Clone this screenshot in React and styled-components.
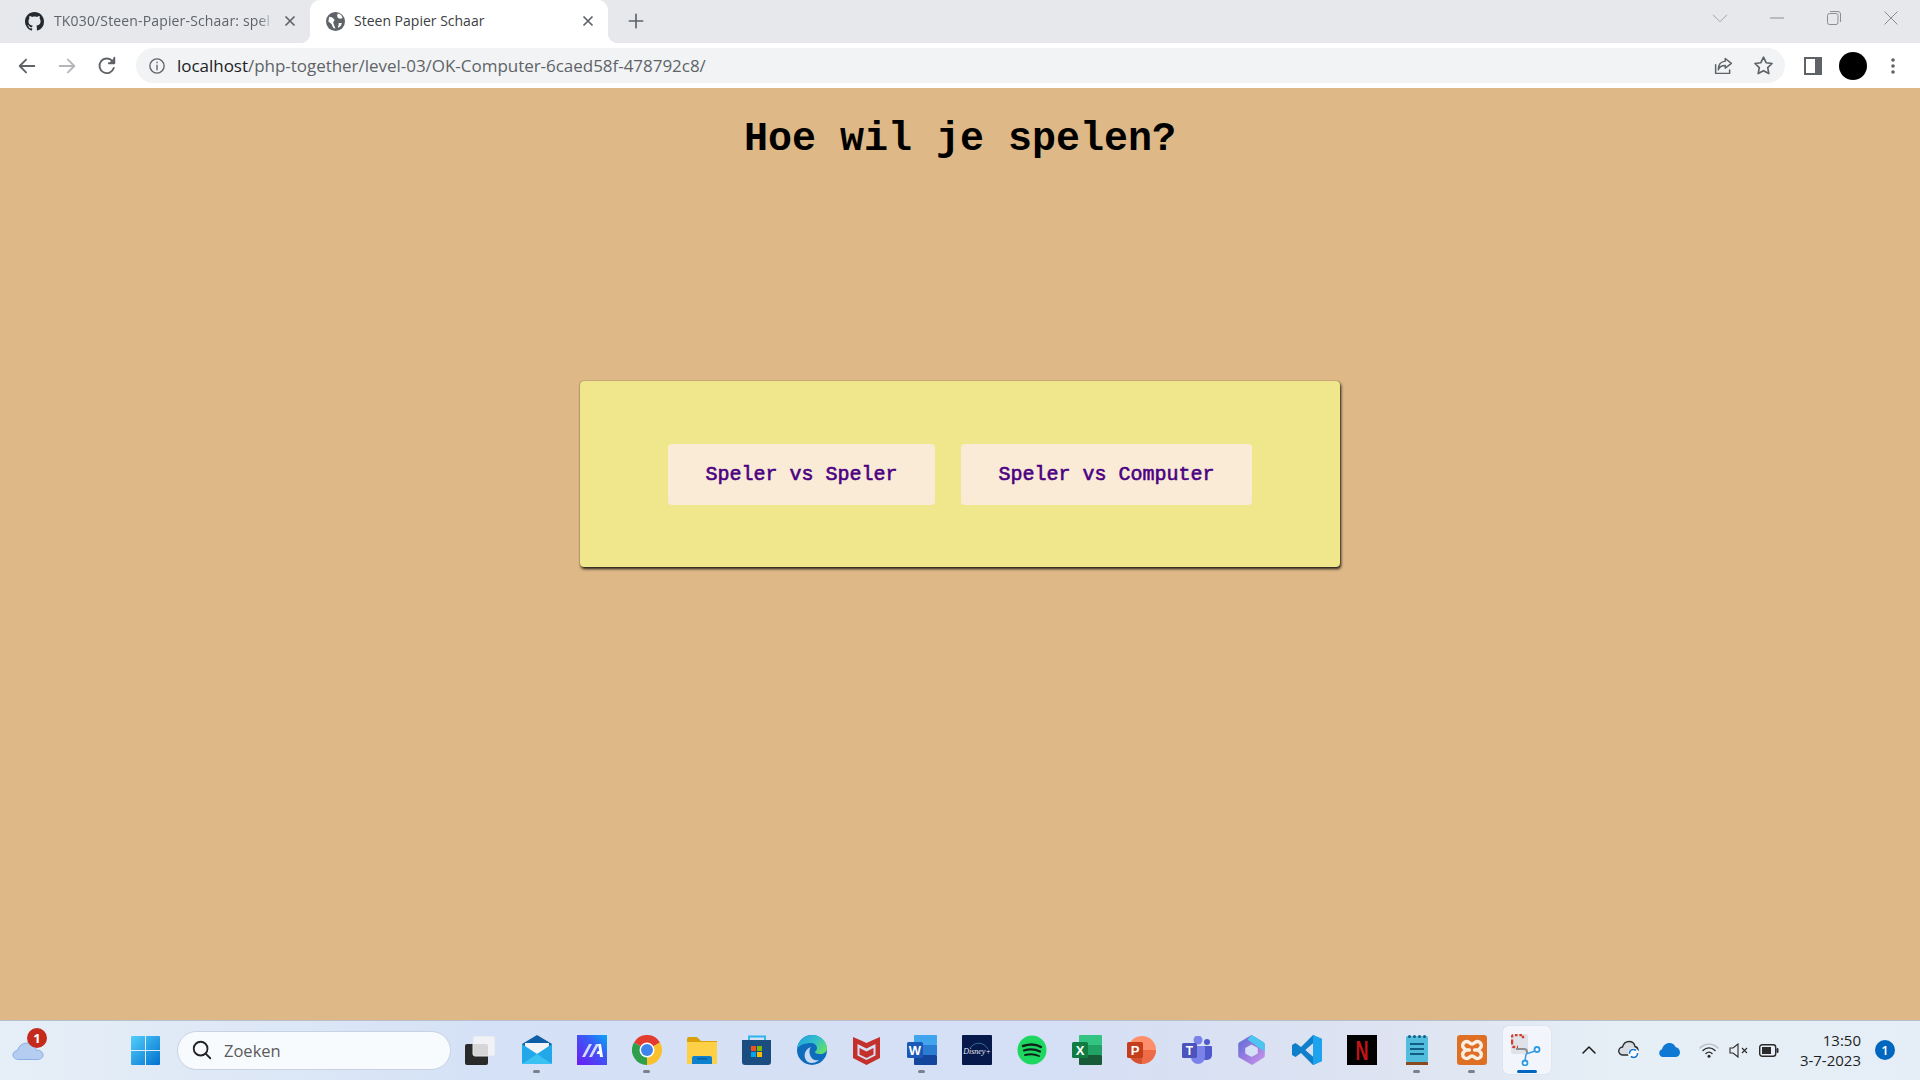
import React from "react";
import styled, { createGlobalStyle } from "styled-components";

const GlobalStyle = createGlobalStyle`
	html, body {
		margin: 0;
		padding: 0;
		height: 100%;
		overflow: hidden;
	}
	* {
		box-sizing: border-box;
	}
	svg {
		display: block;
	}
`;

const uiFont = `"Open Sans", "Noto Sans", sans-serif`;

const Screen = styled.div`
	display: flex;
	flex-direction: column;
	width: 1920px;
	height: 1080px;
	font-family: ${uiFont};
`;

/* browser chrome */
const TabStrip = styled.div`
	display: flex;
	height: 43px;
	flex: none;
	background: #e6e8ec;
`;

const Tab = styled.div`
	position: relative;
	display: flex;
	align-items: center;
	width: ${(props) => props.$width}px;
	height: 43px;
	padding: 0 12px 1px ${(props) => props.$inset}px;
	border-radius: 10px 10px 0 0;
	background: ${(props) => (props.$active ? "#ffffff" : "transparent")};
	${(props) =>
		props.$active &&
		`
		&::before, &::after {
			content: "";
			position: absolute;
			bottom: 0;
			width: 10px;
			height: 10px;
		}
		&::before {
			left: -10px;
			background: radial-gradient(circle at 0 0, transparent 10px, #ffffff 10.5px);
		}
		&::after {
			right: -10px;
			background: radial-gradient(circle at 100% 0, transparent 10px, #ffffff 10.5px);
		}
	`}
`;

const TabTitle = styled.span`
	flex: 1;
	min-width: 0;
	margin: -2px 8px 0 ${(props) => (props.$active ? 9 : 10)}px;
	overflow: hidden;
	white-space: nowrap;
	font-size: 14px;
	color: ${(props) => (props.$active ? "#3c4043" : "#5f6368")};
	${(props) =>
		props.$fade &&
		`
		letter-spacing: 0.15px;
		-webkit-mask-image: linear-gradient(90deg, #000 93%, transparent 100%);
		mask-image: linear-gradient(90deg, #000 93%, transparent 100%);
	`}
`;

const NewTab = styled.div`
	display: flex;
	align-items: center;
	justify-content: center;
	width: 20px;
	height: 42px;
	margin-left: 18px;
`;

const WindowControls = styled.div`
	display: flex;
	margin-left: auto;
`;

const WindowButton = styled.div`
	display: flex;
	align-items: center;
	justify-content: center;
	width: ${(props) => props.$width}px;
	height: 36px;
	margin-right: ${(props) => props.$gap || 0}px;
`;

const Toolbar = styled.div`
	display: flex;
	align-items: center;
	height: 45px;
	flex: none;
	padding: 0 7px 0 7px;
	background: #ffffff;
`;

const ToolButton = styled.div`
	display: flex;
	align-items: center;
	justify-content: center;
	flex: none;
	width: 40px;
	height: 34px;
`;

const Omnibox = styled.div`
	display: flex;
	align-items: center;
	flex: 1;
	height: 35px;
	margin: 0 8px 0 9px;
	padding: 0 2px 0 12px;
	border-radius: 18px;
	background: #f1f3f4;
`;

const Url = styled.div`
	flex: 1;
	margin-left: 11px;
	font-size: 17px;
	letter-spacing: -0.03px;
	white-space: nowrap;
	color: #5f6368;
	span {
		color: #202124;
	}
`;

const Avatar = styled.div`
	width: 28px;
	height: 28px;
	border-radius: 50%;
	background: #000000;
`;

/* page */
const Page = styled.main`
	flex: 1;
	display: flex;
	flex-direction: column;
	align-items: center;
	padding-top: 29px;
	background: #deb887;
`;

const Title = styled.h1`
	margin: 0 0 219px;
	font-family: "Liberation Mono", monospace;
	font-size: 40px;
	font-weight: 700;
	line-height: 45px;
	color: #000000;
`;

const Card = styled.section`
	display: flex;
	justify-content: center;
	gap: 26px;
	width: 760px;
	height: 186px;
	padding-top: 63px;
	border-radius: 4px;
	background: #f0e68c;
	box-shadow: 1px 2px 3px rgba(0, 0, 0, 0.85), 0 0 1px rgba(0, 0, 0, 0.6);
`;

const ModeButton = styled.button`
	height: 61px;
	padding: 0 37.5px;
	border: none;
	border-radius: 4px;
	background: #faebd7;
	font-family: "Liberation Mono", monospace;
	font-size: 20px;
	font-weight: 400;
	-webkit-text-stroke: 0.6px #4b0082;
	color: #4b0082;
`;

/* taskbar */
const Taskbar = styled.footer`
	display: flex;
	align-items: center;
	height: 60px;
	flex: none;
	padding-bottom: 1px;
	border-top: 1px solid #b9bec8;
	background: linear-gradient(90deg, #e6eff7 0%, #d5e1f6 25%, #d5dff5 55%, #dde3f1 72%, #e6eff6 85%, #e5eef6 100%);
`;

const Weather = styled.div`
	position: relative;
	display: flex;
	justify-content: center;
	width: 56px;
	margin-right: 62px;
`;

const WeatherBadge = styled.div`
	position: absolute;
	top: -13px;
	left: 27px;
	width: 20px;
	height: 20px;
	border-radius: 50%;
	background: #c42b1c;
	color: #ffffff;
	font-size: 13px;
	font-weight: 700;
	line-height: 20px;
	text-align: center;
`;

const AppSlot = styled.div`
	position: relative;
	display: flex;
	align-items: center;
	justify-content: center;
	flex: none;
	width: ${(props) => props.$width || 55}px;
	height: 48px;
	${(props) =>
		props.$open &&
		`
		&::after {
			content: "";
			position: absolute;
			left: 50%;
			bottom: 1px;
			width: 7px;
			height: 3px;
			margin-left: -3.5px;
			border-radius: 2px;
			background: #7c808c;
		}
	`}
`;

const ActiveSlot = styled.div`
	position: relative;
	display: flex;
	align-items: center;
	justify-content: center;
	width: 48px;
	height: 48px;
	margin: 0 3.5px;
	border-radius: 5px;
	background: #f2f6fc;
	box-shadow: 0 0 1px rgba(0, 0, 0, 0.2);
	&::after {
		content: "";
		position: absolute;
		left: 14px;
		bottom: 1px;
		width: 20px;
		height: 3px;
		border-radius: 2px;
		background: #0067c0;
	}
`;

const SearchBox = styled.div`
	display: flex;
	align-items: center;
	flex: none;
	width: 274px;
	height: 39px;
	margin: 0 0 0 4px;
	padding-left: 13px;
	border: 1px solid #c8d2e2;
	border-radius: 20px;
	background: #f8fbfe;
	font-size: 16.5px;
	color: #5b5b5b;
	span {
		margin-left: 11px;
	}
`;

const Tray = styled.div`
	display: flex;
	align-items: center;
	margin-left: 15px;
`;

const TrayItem = styled.div`
	display: flex;
	align-items: center;
	justify-content: center;
	width: ${(props) => props.$width}px;
`;

const Clock = styled.div`
	width: 72px;
	margin-top: -1px;
	font-size: 15px;
	line-height: 20px;
	text-align: right;
	white-space: nowrap;
	color: #1f1f1f;
`;

const NotifyBadge = styled.div`
	width: 20px;
	height: 20px;
	margin-left: 14px;
	border-radius: 50%;
	background: #0067c0;
	color: #ffffff;
	font-size: 13px;
	font-weight: 600;
	line-height: 20px;
	text-align: center;
`;

const Stroke = ({ size = 16, color = "#5f6368", width = 2, children }) => (
	<svg width={size} height={size} viewBox="0 0 24 24" fill="none" stroke={color} strokeWidth={width} strokeLinecap="round" strokeLinejoin="round">
		{children}
	</svg>
);

const CloseIcon = () => (
	<svg width="16" height="16" viewBox="0 0 16 16" fill="none" stroke="#5f6368" strokeWidth="1.7">
		<path d="M3.5 3.5l9 9M12.5 3.5l-9 9" />
	</svg>
);

const GithubIcon = () => (
	<svg width="19" height="19" viewBox="0 0 16 16" fill="#24292f">
		<path d="M8 0C3.58 0 0 3.58 0 8c0 3.54 2.29 6.53 5.47 7.59.4.07.55-.17.55-.38 0-.19-.01-.82-.01-1.49-2.01.37-2.53-.49-2.69-.94-.09-.23-.48-.94-.82-1.13-.28-.15-.68-.52-.01-.53.63-.01 1.08.58 1.23.82.72 1.21 1.87.87 2.33.66.07-.52.28-.87.51-1.07-1.78-.2-3.64-.89-3.64-3.95 0-.87.31-1.59.82-2.15-.08-.2-.36-1.02.08-2.12 0 0 .67-.21 2.2.82.64-.18 1.32-.27 2-.27s1.36.09 2 .27c1.53-1.04 2.2-.82 2.2-.82.44 1.1.16 1.92.08 2.12.51.56.82 1.27.82 2.15 0 3.07-1.87 3.75-3.65 3.95.29.25.54.73.54 1.48 0 1.07-.01 1.93-.01 2.2 0 .21.15.46.55.38A8.01 8.01 0 0016 8c0-4.42-3.58-8-8-8z" />
	</svg>
);

const GlobeIcon = () => (
	<svg width="19" height="19" viewBox="0 0 24 24">
		<circle cx="12" cy="12" r="12" fill="#5f6368" />
		<path d="M4 6l4 1 3 3-2 3 1 3 2 5-3-1-2-5-4-3zM15 2l4 1.500 2 4-3 1-3-1-1-3zM16 14l4 0-1 3-3 3-1-1 1-3z" fill="#ffffff" />
	</svg>
);

const CloudWeather = () => (
	<svg width="32" height="19" viewBox="0 0 32 19">
		<path d="M7 18.500c-3.500 0-6-1.700-6-4.500 0-2.600 2-4.200 4.600-4.400C6.600 5 10.500 2 15 2c4.800 0 8.600 3.100 9.300 7.200 3.500-.2 6.700 1.500 6.700 4.800 0 2.900-2.500 4.500-6 4.500z" fill="#b4cdf1" stroke="#88aee4" strokeWidth="1" />
	</svg>
);

const StartIcon = () => (
	<svg width="29" height="29" viewBox="0 0 29 29">
		<defs>
			<linearGradient id="startGrad" x1="0" y1="0" x2="1" y2="1">
				<stop offset="0" stopColor="#52cffb" />
				<stop offset="1" stopColor="#0070cf" />
			</linearGradient>
		</defs>
		<path d="M0 1a1 1 0 011-1h13v14H0zM15 0h13a1 1 0 011 1v13H15zM0 15h14v14H1a1 1 0 01-1-1zM15 15h14v13a1 1 0 01-1 1H15z" fill="url(#startGrad)" />
	</svg>
);

const TaskView = () => (
	<svg width="30" height="29" viewBox="0 0 30 29">
		<rect x="0" y="8" width="23" height="21" rx="2" fill="#2a2a2a" />
		<rect x="8" y="0" width="22" height="20" rx="2" fill="#f4f4f4" fillOpacity="0.85" stroke="#e3e6ea" />
	</svg>
);

const MailIcon = () => (
	<svg width="30" height="30" viewBox="0 0 30 30">
		<path d="M15 0l15 9v4H0V9z" fill="#0f5fa6" />
		<path d="M3 8h24v10H3z" fill="#f2f4f7" />
		<path d="M0 9l15 10L30 9v19a1 1 0 01-1 1H1a1 1 0 01-1-1z" fill="#22a8e8" />
		<path d="M0 29l15-10 15 10z" fill="#3cc2f2" />
	</svg>
);

const MaIcon = () => (
	<svg width="30" height="30" viewBox="0 0 30 30">
		<defs>
			<linearGradient id="maGrad" x1="0" y1="1" x2="1" y2="0">
				<stop offset="0" stopColor="#6f1bf5" />
				<stop offset="0.6" stopColor="#3b58f5" />
				<stop offset="1" stopColor="#04a8f8" />
			</linearGradient>
		</defs>
		<rect width="30" height="30" fill="url(#maGrad)" />
		<path d="M5 22l7-13h3l-7 13zM12 22l7-13h3l-7 13z" fill="#d5dcff" />
		<path d="M21 9h3l2 13h-3l-.4-3h-3l1.200-3h1.400z" fill="#ffffff" />
	</svg>
);

const ChromeIcon = () => (
	<svg width="30" height="30" viewBox="0 0 30 30">
		<path d="M15 15L2 7.500A15 15 0 0128 7.500z" fill="#e33b2e" />
		<path d="M15 15L28 7.500A15 15 0 0115 30z" fill="#fbc02d" />
		<path d="M15 15l0 15A15 15 0 012 7.500z" fill="#2fa04a" />
		<circle cx="15" cy="15" r="7.500" fill="#ffffff" />
		<circle cx="15" cy="15" r="6" fill="#3f84ea" />
	</svg>
);

const FolderIcon = () => (
	<svg width="30" height="27" viewBox="0 0 30 27">
		<path d="M0 2a2 2 0 012-2h8l4 4h16v6H0z" fill="#d9a20d" />
		<path d="M0 5h30v21a1 1 0 01-1 1H1a1 1 0 01-1-1z" fill="#fdd045" />
		<path d="M5 27v-6a2 2 0 012-2h16a2 2 0 012 2v6z" fill="#0c82cf" />
		<rect x="10" y="21" width="10" height="1.500" fill="#0b5a9e" />
	</svg>
);

const StoreIcon = () => (
	<svg width="30" height="30" viewBox="0 0 30 30">
		<path d="M7 6V1.500h16V6" fill="none" stroke="#2bb5ec" strokeWidth="1.800" />
		<path d="M0 5h29v22a3 3 0 01-3 3H3a3 3 0 01-3-3z" fill="#1c4d80" />
		<rect x="9" y="11" width="5" height="5" fill="#f25022" />
		<rect x="15" y="11" width="5" height="5" fill="#7fba00" />
		<rect x="9" y="17" width="5" height="5" fill="#00a4ef" />
		<rect x="15" y="17" width="5" height="5" fill="#ffb900" />
	</svg>
);

const EdgeIcon = () => (
	<svg width="30" height="30" viewBox="0 0 30 30">
		<defs>
			<linearGradient id="edgeGrad" x1="0" y1="0" x2="1" y2="0.6">
				<stop offset="0" stopColor="#1b9de2" />
				<stop offset="0.6" stopColor="#35c1c9" />
				<stop offset="1" stopColor="#5fdc72" />
			</linearGradient>
		</defs>
		<circle cx="15" cy="15" r="15" fill="#0f6cbd" />
		<path d="M0 14C1 5 8 0 15 0c9 0 15 7 15 13 0 4-3 6-7 6-3 0-5-1-5-2 0-1 2-1 2-4 0-3-3-5-6-5-6 0-12 2-14 6z" fill="url(#edgeGrad)" />
		<path d="M22 25c-3 3-8 4-11 2-3-2-4-6-3-9 1-3 3-5 6-6-2 2-2 5-1 8 2 5 6 6 9 5z" fill="#d5dff5" fillOpacity="0.95" />
	</svg>
);

const McafeeIcon = () => (
	<svg width="27" height="30" viewBox="0 0 27 30">
		<path d="M0 2l7 3 6.500 3L20 5l7-3v21l-13.500 7L0 23z" fill="#c4302b" />
		<path d="M4.500 9l9 4.500 9-4.500v11.500l-9 4.500-9-4.500z" fill="#d5dff5" />
		<path d="M6.500 13l7 3.500 7-3.500v6.500l-7 3.500-7-3.500z" fill="#c4302b" />
	</svg>
);

const OfficeDoc = ({ letter, badge, colors, round }) => (
	<svg width="30" height="30" viewBox="0 0 30 30">
		{round ? (
			<>
				<circle cx="15" cy="15" r="14" fill={colors[0]} />
				<path d="M15 15h14a14 14 0 01-14 14z" fill={colors[1]} />
				<path d="M15 15v14A14 14 0 011 15z" fill={colors[2]} />
			</>
		) : (
			<>
				<rect x="7" y="0" width="23" height="10" rx="1" fill={colors[0]} />
				<rect x="7" y="10" width="23" height="10" fill={colors[1]} />
				<rect x="7" y="20" width="23" height="10" rx="1" fill={colors[2]} />
			</>
		)}
		<rect x="0" y="7" width="16" height="16" rx="1.500" fill={badge} />
		<text x="8" y="20" textAnchor="middle" fontFamily="Liberation Sans, sans-serif" fontSize="13" fontWeight="700" fill="#ffffff">
			{letter}
		</text>
	</svg>
);

const DisneyIcon = () => (
	<svg width="30" height="30" viewBox="0 0 30 30">
		<rect width="30" height="30" rx="1" fill="#07184a" />
		<path d="M8 13C13 6 22 7 26 14" fill="none" stroke="#4fa4c8" strokeWidth="0.6" />
		<text x="15" y="19" textAnchor="middle" fontFamily="Liberation Serif, serif" fontStyle="italic" fontSize="8" fill="#e4e8f2">
			Disney+
		</text>
	</svg>
);

const SpotifyIcon = () => (
	<svg width="30" height="30" viewBox="0 0 30 30">
		<circle cx="15" cy="15" r="14.500" fill="#1ed760" />
		<g fill="none" stroke="#10231a" strokeLinecap="round">
			<path d="M6 11c6-2 13-2 18 1" strokeWidth="2.400" />
			<path d="M7 15.500c5-1.500 11-1.500 16 1" strokeWidth="2.200" />
			<path d="M8 20c5-1.200 10-1 14 1" strokeWidth="1.800" />
		</g>
	</svg>
);

const TeamsIcon = () => (
	<svg width="30" height="28" viewBox="0 0 30 28">
		<circle cx="16" cy="4" r="4.500" fill="#7b83eb" />
		<circle cx="25" cy="6" r="3" fill="#5059c9" />
		<path d="M20 10h9a1 1 0 011 1v8a5 5 0 01-5 5h-5z" fill="#5059c9" />
		<path d="M9 10h13a1 1 0 011 1v10a7 7 0 01-14 0z" fill="#7b83eb" />
		<rect x="0" y="7" width="15" height="15" rx="1.500" fill="#4b53bc" />
		<text x="7.500" y="19" textAnchor="middle" fontFamily="Liberation Sans, sans-serif" fontSize="12" fontWeight="700" fill="#ffffff">
			T
		</text>
	</svg>
);

const M365Icon = () => (
	<svg width="27" height="30" viewBox="0 0 27 30">
		<defs>
			<linearGradient id="m365Grad" x1="0" y1="0" x2="1" y2="1">
				<stop offset="0" stopColor="#5a6ed6" />
				<stop offset="0.5" stopColor="#9b7be0" />
				<stop offset="1" stopColor="#c295e8" />
			</linearGradient>
		</defs>
		<path d="M13.500 2l11.500 7v12l-11 7L2 21V9z" fill="url(#m365Grad)" stroke="url(#m365Grad)" strokeWidth="3.500" strokeLinejoin="round" />
		<path d="M13 0.500c1 0 2 .3 3 .8l9 5.500c1 .6 1.800 2 1.800 3.500v6l-6.800-4-3.500-3-7-4.500z" fill="#4cc6ee" />
		<path d="M13.500 10.500l5.500 3v4.500l-5.500 3L8 18v-4.500z" fill="#d5dff5" stroke="#d5dff5" strokeWidth="1.500" strokeLinejoin="round" />
	</svg>
);

const VscodeIcon = () => (
	<svg width="30" height="30" viewBox="0 0 30 30">
		<path d="M21 0l9 4v22l-9 4-12-12-5.500 4L0 20v-10l3.500-2L9 12zM21 8.500L13.500 15 21 21.500z" fill="#0f7fc9" />
		<path d="M21 0l9 4v22l-9 4z" fill="#1ea3ef" />
		<path d="M21 8.500v13L13.500 15z" fill="#d5dff5" />
	</svg>
);

const NetflixIcon = () => (
	<svg width="30" height="30" viewBox="0 0 30 30">
		<rect width="30" height="30" fill="#000000" />
		<text x="0" y="0" transform="translate(15 24.700) scale(0.900 1.350)" textAnchor="middle" fontFamily="Liberation Sans, sans-serif" fontSize="20" fontWeight="700" fill="#c1141a">
			N
		</text>
	</svg>
);

const NotepadIcon = () => (
	<svg width="22" height="30" viewBox="0 0 22 30">
		<rect x="0" y="1" width="22" height="26" rx="1.500" fill="#52bcdc" />
		<rect x="0" y="27" width="22" height="3" fill="#8a4a1d" />
		<g fill="#125d86">
			<circle cx="3.500" cy="1.500" r="1.500" />
			<circle cx="8.500" cy="1.500" r="1.500" />
			<circle cx="13.500" cy="1.500" r="1.500" />
			<circle cx="18.500" cy="1.500" r="1.500" />
			<rect x="4" y="8" width="14" height="2" />
			<rect x="4" y="13" width="14" height="2" />
			<rect x="4" y="18" width="14" height="2" />
		</g>
	</svg>
);

const XamppIcon = () => (
	<svg width="30" height="30" viewBox="0 0 30 30">
		<rect width="30" height="30" rx="3" fill="#e06f26" />
		<g transform="translate(15 15) scale(0.850) translate(-15 -15)" fill="none" stroke="#fbeee2" strokeWidth="4" strokeLinejoin="round" strokeLinecap="round">
			<path d="M9 5c3 0 3 3 6 3s3-3 6-3 5 2 5 5-3 3-3 5 3 2 3 5-2 5-5 5-3-3-6-3-3 3-6 3-5-2-5-5 3-3 3-5-3-2-3-5 2-5 5-5z" />
			<path d="M8 15h4M18 15h4" />
		</g>
	</svg>
);

const SnipIcon = () => (
	<svg width="32" height="32" viewBox="0 0 32 32">
		<rect x="0" y="0" width="17" height="20" rx="2" fill="#dfe3e9" />
		<path d="M1 8V3a2 2 0 012-2h9v4" fill="none" stroke="#d83b2c" strokeWidth="2.400" strokeDasharray="2.600 1.800" />
		<path d="M1 8v3a2 2 0 002 2h4" fill="none" stroke="#d83b2c" strokeWidth="2.400" strokeDasharray="2.600 1.800" />
		<path d="M5 15h8a3 3 0 013 3v2" fill="none" stroke="#8d8d8d" strokeWidth="2" />
		<path d="M15 20l9-3M15 20l-1 7" fill="none" stroke="#3b9de0" strokeWidth="1.600" />
		<circle cx="26" cy="15.500" r="2.500" fill="#ffffff" stroke="#2f9be4" strokeWidth="1.800" />
		<circle cx="14" cy="29" r="2.500" fill="#ffffff" stroke="#2f9be4" strokeWidth="1.800" />
	</svg>
);

const apps = [
	{ icon: <MailIcon />, open: true },
	{ icon: <MaIcon /> },
	{ icon: <ChromeIcon />, open: true },
	{ icon: <FolderIcon /> },
	{ icon: <StoreIcon /> },
	{ icon: <EdgeIcon /> },
	{ icon: <McafeeIcon /> },
	{ icon: <OfficeDoc letter="W" badge="#1b58b8" colors={["#41a5ee", "#2b7cd3", "#13459c"]} />, open: true },
	{ icon: <DisneyIcon /> },
	{ icon: <SpotifyIcon /> },
	{ icon: <OfficeDoc letter="X" badge="#107c41" colors={["#33c481", "#21a366", "#185c37"]} /> },
	{ icon: <OfficeDoc letter="P" badge="#c43e1c" colors={["#ff8f6b", "#ed6c47", "#d35230"]} round /> },
	{ icon: <TeamsIcon /> },
	{ icon: <M365Icon /> },
	{ icon: <VscodeIcon /> },
	{ icon: <NetflixIcon /> },
	{ icon: <NotepadIcon />, open: true },
	{ icon: <XamppIcon />, open: true },
];

export default function App() {
	return (
		<Screen>
			<GlobalStyle />
			<TabStrip>
				<Tab $width={310} $inset={25}>
					<GithubIcon />
					<TabTitle $fade>TK030/Steen-Papier-Schaar: spel</TabTitle>
					<CloseIcon />
				</Tab>
				<Tab $width={298} $inset={16} $active>
					<GlobeIcon />
					<TabTitle $active>Steen Papier Schaar</TabTitle>
					<CloseIcon />
				</Tab>
				<NewTab>
					<Stroke size={22} width={2}>
						<path d="M12 4v16M4 12h16" />
					</Stroke>
				</NewTab>
				<WindowControls>
					<WindowButton $width={40} $gap={8}>
						<Stroke size={18} color="#8b8d91" width={1}>
							<path d="M3 8l9 9 9-9" />
						</Stroke>
					</WindowButton>
					<WindowButton $width={57}>
						<svg width="14" height="2" viewBox="0 0 14 2">
							<path d="M0 1h14" stroke="#8b8d91" />
						</svg>
					</WindowButton>
					<WindowButton $width={57}>
						<svg width="14" height="14" viewBox="0 0 14 14" fill="none" stroke="#8b8d91">
							<rect x="0.500" y="2.500" width="10.500" height="11" rx="2" />
							<path d="M3 0.500h8a2.500 2.500 0 012.500 2.500v8" />
						</svg>
					</WindowButton>
					<WindowButton $width={58}>
						<svg width="14" height="14" viewBox="0 0 14 14" stroke="#8b8d91">
							<path d="M0.500 0.500l13 13M13.500 0.500l-13 13" />
						</svg>
					</WindowButton>
				</WindowControls>
			</TabStrip>
			<Toolbar>
				<ToolButton>
					<Stroke size={22}>
						<path d="M20 12H4M11 5l-7 7 7 7" />
					</Stroke>
				</ToolButton>
				<ToolButton>
					<Stroke size={22} color="#b4b6ba">
						<path d="M4 12h16M13 5l7 7-7 7" />
					</Stroke>
				</ToolButton>
				<ToolButton>
					<Stroke size={22}>
						<path d="M19.500 14a8 8 0 11-1.500-7.300" />
						<path d="M20 3v6h-6" fill="#5f6368" />
					</Stroke>
				</ToolButton>
				<Omnibox>
					<Stroke size={18} width={1.8}>
						<circle cx="12" cy="12" r="9.500" />
						<path d="M12 11v6M12 7v.500" />
					</Stroke>
					<Url>
						<span>localhost</span>/php-together/level-03/OK-Computer-6caed58f-478792c8/
					</Url>
					<ToolButton>
						<Stroke size={21} width={1.7}>
							<path d="M3 11v10h16v-4" />
							<path d="M14 4l7 5.500-7 5.500v-3c-4 0-7 1.500-8 5 0-6 3-9.500 8-10z" />
						</Stroke>
					</ToolButton>
					<ToolButton>
						<Stroke size={21} width={1.9}>
							<path d="M12 2.500l3 6.300 6.800.9-5 4.700 1.300 6.800-6.100-3.300-6.100 3.300 1.300-6.800-5-4.700 6.800-.9z" />
						</Stroke>
					</ToolButton>
				</Omnibox>
				<ToolButton>
					<svg width="18" height="18" viewBox="0 0 18 18">
						<rect width="18" height="18" fill="#5f6368" />
						<rect x="2" y="2" width="9" height="14" fill="#ffffff" />
					</svg>
				</ToolButton>
				<ToolButton>
					<Avatar />
				</ToolButton>
				<ToolButton>
					<svg width="4" height="16" viewBox="0 0 4 16" fill="#5f6368">
						<circle cx="2" cy="2" r="1.800" />
						<circle cx="2" cy="8" r="1.800" />
						<circle cx="2" cy="14" r="1.800" />
					</svg>
				</ToolButton>
			</Toolbar>
			<Page>
				<Title>Hoe wil je spelen?</Title>
				<Card>
					<ModeButton>Speler vs Speler</ModeButton>
					<ModeButton>Speler vs Computer</ModeButton>
				</Card>
			</Page>
			<Taskbar>
				<Weather>
					<CloudWeather />
					<WeatherBadge>1</WeatherBadge>
				</Weather>
				<AppSlot>
					<StartIcon />
				</AppSlot>
				<SearchBox>
					<Stroke size={22} color="#222222" width={2}>
						<circle cx="10.500" cy="10.500" r="7.500" />
						<path d="M16 16l5 5" />
					</Stroke>
					<span>Zoeken</span>
				</SearchBox>
				<AppSlot $width={58}>
					<TaskView />
				</AppSlot>
				{apps.map((app, index) => (
					<AppSlot key={index} $open={app.open}>
						{app.icon}
					</AppSlot>
				))}
				<ActiveSlot>
					<SnipIcon />
				</ActiveSlot>
				<Tray>
					<TrayItem $width={40}>
						<Stroke size={18} color="#1c1c1c" width={2}>
							<path d="M4 16l8-8 8 8" />
						</Stroke>
					</TrayItem>
					<TrayItem $width={40}>
						<svg width="22" height="20" viewBox="0 0 22 20">
							<path d="M5 15a4 4 0 01-.5-8C5.500 3.500 8.500 1.500 11 1.500c3 0 5.500 2 6 5 2 .5 3 2 3 4H12v4.500z" fill="#d8dce2" stroke="#2c2c2c" strokeWidth="1.400" />
							<circle cx="15.500" cy="13.500" r="5.500" fill="#ffffff" />
							<circle cx="15.500" cy="13.500" r="4" fill="none" stroke="#0f78d4" strokeWidth="1.700" strokeDasharray="9 3" />
						</svg>
					</TrayItem>
					<TrayItem $width={40}>
						<svg width="21" height="14" viewBox="0 0 21 14">
							<path d="M4 14a4 4 0 01-1-7.800C4 2.500 7 0 10.500 0c2.800 0 5 1.500 6 4C19 4.500 21 6.500 21 9.500c0 2.500-2 4.500-4.500 4.500z" fill="#0f78d4" />
						</svg>
					</TrayItem>
					<TrayItem $width={40}>
						<svg width="20" height="15" viewBox="0 0 20 15" fill="none" strokeLinecap="round">
							<path d="M1 5c5-5.300 13-5.300 18 0" stroke="#b9bcc2" strokeWidth="1.200" />
							<path d="M4 7.500c3.500-3.500 8.500-3.500 12 0" stroke="#2a2a2a" strokeWidth="1.400" />
							<path d="M7 10.500c1.800-1.800 4.200-1.800 6 0" stroke="#2a2a2a" strokeWidth="1.400" />
							<circle cx="10" cy="13.300" r="1.500" fill="#2a2a2a" />
						</svg>
					</TrayItem>
					<TrayItem $width={20}>
						<svg width="20" height="15" viewBox="0 0 20 15" fill="none" stroke="#2a2a2a" strokeWidth="1.100">
							<path d="M1 5h3l5-4v13l-5-4H1z" />
							<path d="M13 5l5 5M18 5l-5 5" />
						</svg>
					</TrayItem>
					<TrayItem $width={40}>
						<svg width="20" height="13" viewBox="0 0 20 13">
							<rect x="0.700" y="0.700" width="16" height="11.600" rx="2.500" fill="none" stroke="#2a2a2a" strokeWidth="1.400" />
							<rect x="3" y="3" width="9" height="7" fill="#2a2a2a" />
							<rect x="17.500" y="4" width="2" height="5" rx="1" fill="#2a2a2a" />
						</svg>
					</TrayItem>
					<Clock>
						13:50
						<br />
						3-7-2023
					</Clock>
					<NotifyBadge>1</NotifyBadge>
				</Tray>
			</Taskbar>
		</Screen>
	);
}
